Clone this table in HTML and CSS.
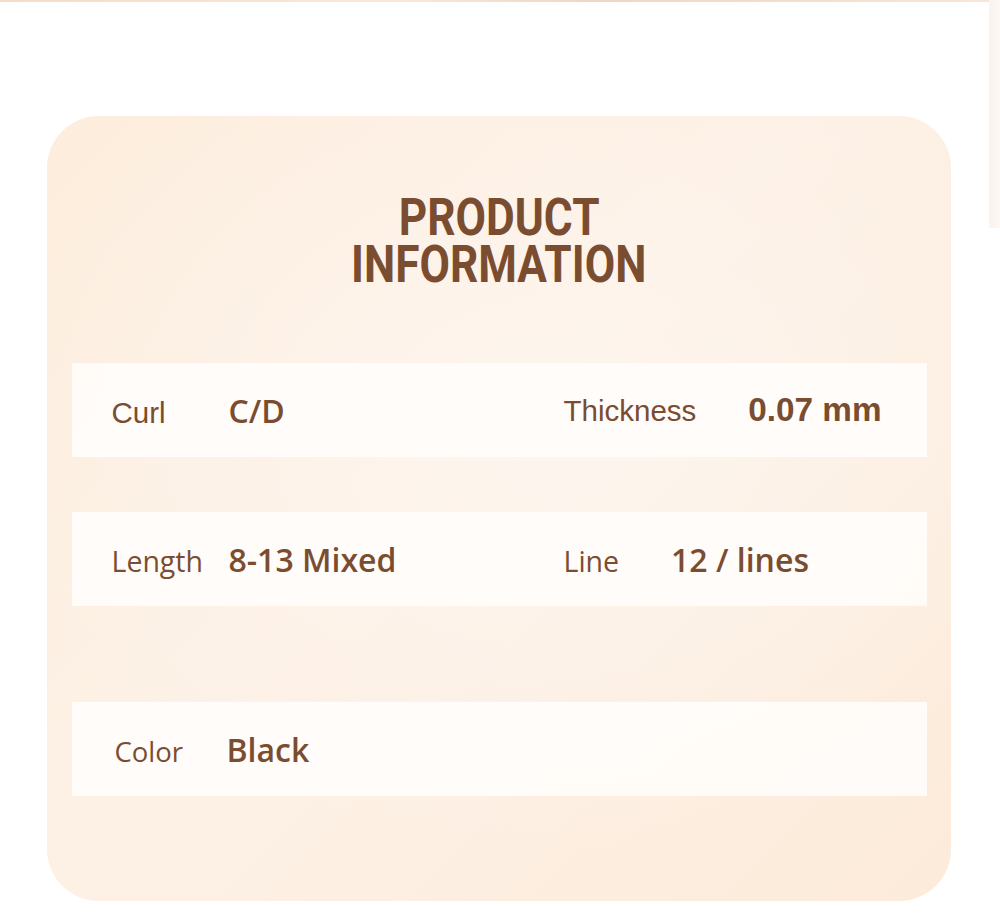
FILE: index.html
```html
<!DOCTYPE html>
<html lang="en">
<head>
<meta charset="utf-8">
<title>Product Information</title>
<link rel="stylesheet" href="styles.css">
</head>
<body>
<div class="page">
  <div class="main">
    <div class="top-line"></div>
    <section class="card">
      <h1 class="title"><span class="title-line">PRODUCT</span><span class="title-line">INFORMATION</span></h1>
      <div class="row row-1">
        <div class="cell cell-left">
          <span class="label label-arial">Curl</span>
          <span class="value">C/D</span>
        </div>
        <div class="cell cell-right">
          <span class="label label-arial">Thickness</span>
          <span class="value value-arial">0.07 mm</span>
        </div>
      </div>
      <div class="row row-2">
        <div class="cell cell-left">
          <span class="label">Length</span>
          <span class="value">8-13 Mixed</span>
        </div>
        <div class="cell cell-right">
          <span class="label">Line</span>
          <span class="value">12 / lines</span>
        </div>
      </div>
      <div class="row row-3">
        <div class="cell cell-left cell-color">
          <span class="label">Color</span>
          <span class="value">Black</span>
        </div>
      </div>
    </section>
  </div>
  <div class="side-strip"></div>
</div>
</body>
</html>
```

FILE: styles.css
```css
html, body {
  margin: 0;
  padding: 0;
  background: #ffffff;
}

.page {
  display: flex;
  align-items: flex-start;
  width: 1000px;
  height: 922px;
  overflow: hidden;
}

.main {
  width: 989px;
  flex: none;
}

.side-strip {
  width: 11px;
  height: 228px;
  background: linear-gradient(90deg, #fbf3ec, #fdf8f3);
  flex: none;
}

.top-line {
  height: 2px;
  background: linear-gradient(90deg, #f5dcc6, #f9e8d9 40%, #eed7c4 60%, #f8e6d6);
}

.card {
  margin: 114px 0 0 47px;
  width: 904px;
  height: 785px;
  box-sizing: border-box;
  border-radius: 52px;
  background:
    radial-gradient(ellipse 60% 55% at 55% 40%, #fdf5ee 0%, rgba(253,245,238,0) 100%),
    linear-gradient(135deg, #fdeddc 0%, #fdf1e6 45%, #fcebda 100%);
  padding-top: 78px;
  display: flex;
  flex-direction: column;
  align-items: center;
}

.title {
  margin: 0;
  font-family: Roboto, "Liberation Sans", sans-serif;
  font-weight: 700;
  font-size: 52px;
  line-height: 47px;
  color: #7a4d30;
  text-align: center;
  display: flex;
  flex-direction: column;
  align-items: center;
}

.title-line {
  display: block;
  height: 47px;
  transform: scaleX(0.85);
  white-space: nowrap;
}

.row {
  width: 855px;
  height: 94px;
  background: rgba(255, 253, 251, 0.9);
  display: flex;
  align-items: center;
}

.row-1 { margin-top: 75px; }
.row-2 { margin-top: 55px; }
.row-3 { margin-top: 96px; }

.cell {
  display: flex;
  align-items: baseline;
}

.cell-left {
  width: 492px;
  padding-left: 40px;
  box-sizing: border-box;
}

.cell-left .label {
  width: 117px;
  flex: none;
}

.cell-color {
  padding-left: 43px;
}

.cell-color .label {
  width: 112px;
  font-size: 27.5px;
}

.cell-right {
  gap: 52px;
}

.label {
  font-family: "Open Sans", sans-serif;
  font-size: 28.5px;
  color: #7a4d30;
}

.label-arial {
  font-family: "Liberation Sans", Arial, sans-serif;
  font-size: 29.5px;
}

.value {
  font-family: "Open Sans", sans-serif;
  font-weight: 600;
  font-size: 32px;
  color: #7a4d30;
}

.value-arial {
  font-family: "Liberation Sans", Arial, sans-serif;
  font-weight: 700;
  font-size: 33.3px;
}
```
